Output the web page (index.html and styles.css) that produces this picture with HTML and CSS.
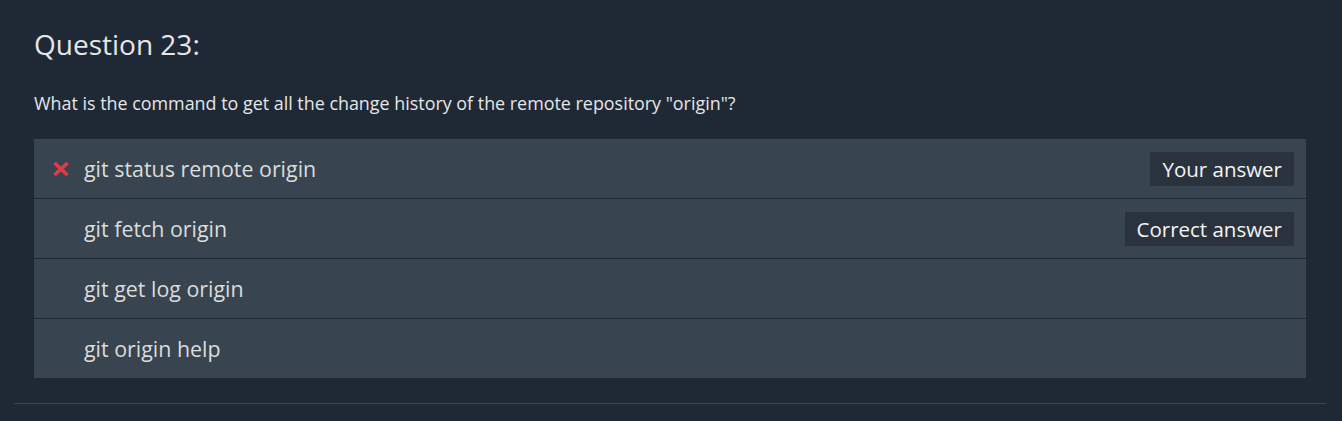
FILE: index.html
```html
<!DOCTYPE html>
<html>
<head>
<meta charset="utf-8">
<link rel="stylesheet" href="styles.css">
</head>
<body>
<div class="page">
  <div class="question">
    <h2 class="q-title">Question 23:</h2>
    <p class="q-text">What is the command to get all the change history of the remote repository "origin"?</p>
    <ul class="answers">
      <li class="answer wrong">
        <span class="mark"><svg width="16" height="14" viewBox="0 0 16 14"><path d="M1.5 1 L14.5 13 M14.5 1 L1.5 13" stroke="#e03a4a" stroke-width="3.6" stroke-linecap="butt"/></svg></span>
        <span class="label">git status remote origin</span>
        <span class="badge">Your answer</span>
      </li>
      <li class="answer">
        <span class="mark"></span>
        <span class="label">git fetch origin</span>
        <span class="badge">Correct answer</span>
      </li>
      <li class="answer">
        <span class="mark"></span>
        <span class="label">git get log origin</span>
      </li>
      <li class="answer">
        <span class="mark"></span>
        <span class="label">git origin help</span>
      </li>
    </ul>
  </div>
  <hr class="sep">
</div>
</body>
</html>
```
FILE: styles.css
```css
html, body {
  margin: 0;
  padding: 0;
  background: #1e2935;
}
body {
  font-family: "Open Sans", "Noto Sans", sans-serif;
  color: #e3e3e3;
}
.page {
  padding: 0 16px 0 14px;
}
.question {
  padding: 24px 20px 25px 20px;
}
.q-title {
  margin: 0;
  font-weight: 400;
  font-size: 28px;
  line-height: 40px;
  color: #e6e6e6;
}
.q-text {
  margin: 27px 0 0 0;
  font-size: 17.9px;
  line-height: 24px;
  color: #e6e6e6;
}
.answers {
  list-style: none;
  margin: 24px 0 0 0;
  padding: 0;
  background: #38444f;
}
.answer {
  display: flex;
  align-items: center;
  height: 59px;
  padding: 0 12px 0 19px;
  border-top: 1px solid #1e2935;
  font-size: 21.4px;
  color: #dcdcdc;
}
.answer:first-child {
  border-top: none;
}
.mark {
  width: 31px;
  display: flex;
  align-items: center;
}
.label {
  flex: 1;
}
.badge {
  background: #2a333d;
  color: #f4f4f4;
  padding: 0 12px;
  height: 34px;
  line-height: 34px;
  font-size: 20.5px;
}
.sep {
  margin: 0;
  border: none;
  border-top: 1px solid #394450;
}
```
